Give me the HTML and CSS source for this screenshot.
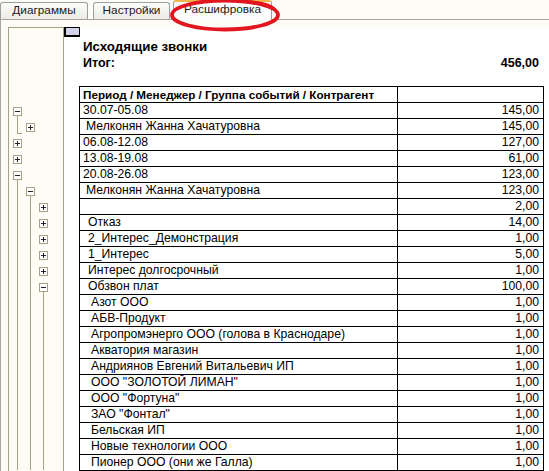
FILE: index.html
```html
<!DOCTYPE html>
<html lang="ru">
<head>
<meta charset="utf-8">
<title>Расшифровка</title>
<link rel="stylesheet" href="styles.css">
</head>
<body>
<div class="tabs">
  <div class="tab tab-1">Диаграммы</div>
  <div class="tab tab-2">Настройки</div>
  <div class="tab tab-active">Расшифровка</div>
  <svg class="mark" width="120" height="38" viewBox="0 0 120 38" aria-hidden="true">
    <ellipse cx="58" cy="19" rx="53" ry="14.5" fill="none" stroke="#e3161f" stroke-width="3.8"/>
    <path d="M78 5.5 Q104 6 109 15" fill="none" stroke="#e3161f" stroke-width="2.6"/>
  </svg>
</div>
<div class="panel">
  <div class="frame">
    <div class="gutter">
      <div class="gutter-head"></div>
      <div class="g-row"><div class="c open"><div class="bx mn"></div></div></div>
      <div class="g-row"><div class="c end"></div><div class="c"><div class="bx pl"></div></div></div>
      <div class="g-row"><div class="c"><div class="bx pl"></div></div></div>
      <div class="g-row"><div class="c"><div class="bx pl"></div></div></div>
      <div class="g-row"><div class="c open"><div class="bx mn"></div></div></div>
      <div class="g-row"><div class="c ln"></div><div class="c open"><div class="bx mn"></div></div></div>
      <div class="g-row"><div class="c ln"></div><div class="c ln"></div><div class="c"><div class="bx pl"></div></div></div>
      <div class="g-row"><div class="c ln"></div><div class="c ln"></div><div class="c"><div class="bx pl"></div></div></div>
      <div class="g-row"><div class="c ln"></div><div class="c ln"></div><div class="c"><div class="bx pl"></div></div></div>
      <div class="g-row"><div class="c ln"></div><div class="c ln"></div><div class="c"><div class="bx pl"></div></div></div>
      <div class="g-row"><div class="c ln"></div><div class="c ln"></div><div class="c"><div class="bx pl"></div></div></div>
      <div class="g-row"><div class="c ln"></div><div class="c ln"></div><div class="c open"><div class="bx mn"></div></div></div>
      <div class="g-row"><div class="c ln"></div><div class="c ln"></div><div class="c ln"></div></div>
      <div class="g-row"><div class="c ln"></div><div class="c ln"></div><div class="c ln"></div></div>
      <div class="g-row"><div class="c ln"></div><div class="c ln"></div><div class="c ln"></div></div>
      <div class="g-row"><div class="c ln"></div><div class="c ln"></div><div class="c ln"></div></div>
      <div class="g-row"><div class="c ln"></div><div class="c ln"></div><div class="c ln"></div></div>
      <div class="g-row"><div class="c ln"></div><div class="c ln"></div><div class="c ln"></div></div>
      <div class="g-row"><div class="c ln"></div><div class="c ln"></div><div class="c ln"></div></div>
      <div class="g-row"><div class="c ln"></div><div class="c ln"></div><div class="c ln"></div></div>
      <div class="g-row"><div class="c ln"></div><div class="c ln"></div><div class="c ln"></div></div>
      <div class="g-row"><div class="c ln"></div><div class="c ln"></div><div class="c ln"></div></div>
      <div class="g-row"><div class="c ln"></div><div class="c ln"></div><div class="c ln"></div></div>
    </div>
    <div class="sheet">
      <div class="corner"></div>
      <div class="report">
        <div class="title">Исходящие звонки</div>
        <div class="total"><span>Итог:</span><span>456,00</span></div>
        <table class="grid">
          <tr class="head"><td class="name">Период / Менеджер / Группа событий / Контрагент</td><td class="val"></td></tr>
          <tr><td class="name l1">30.07-05.08</td><td class="val">145,00</td></tr>
          <tr><td class="name l2">Мелконян Жанна Хачатуровна</td><td class="val">145,00</td></tr>
          <tr><td class="name l1">06.08-12.08</td><td class="val">127,00</td></tr>
          <tr><td class="name l1">13.08-19.08</td><td class="val">61,00</td></tr>
          <tr><td class="name l1">20.08-26.08</td><td class="val">123,00</td></tr>
          <tr><td class="name l2">Мелконян Жанна Хачатуровна</td><td class="val">123,00</td></tr>
          <tr><td class="name l3"></td><td class="val">2,00</td></tr>
          <tr><td class="name l3">Отказ</td><td class="val">14,00</td></tr>
          <tr><td class="name l3">2_Интерес_Демонстрация</td><td class="val">1,00</td></tr>
          <tr><td class="name l3">1_Интерес</td><td class="val">5,00</td></tr>
          <tr><td class="name l3">Интерес долгосрочный</td><td class="val">1,00</td></tr>
          <tr><td class="name l3">Обзвон плат</td><td class="val">100,00</td></tr>
          <tr><td class="name l4">Азот ООО</td><td class="val">1,00</td></tr>
          <tr><td class="name l4">АБВ-Продукт</td><td class="val">1,00</td></tr>
          <tr><td class="name l4">Агропромэнерго ООО (голова в Краснодаре)</td><td class="val">1,00</td></tr>
          <tr><td class="name l4">Акватория магазин</td><td class="val">1,00</td></tr>
          <tr><td class="name l4">Андриянов Евгений Витальевич ИП</td><td class="val">1,00</td></tr>
          <tr><td class="name l4">ООО "ЗОЛОТОЙ ЛИМАН"</td><td class="val">1,00</td></tr>
          <tr><td class="name l4">ООО "Фортуна"</td><td class="val">1,00</td></tr>
          <tr><td class="name l4">ЗАО "Фонтал"</td><td class="val">1,00</td></tr>
          <tr><td class="name l4">Бельская ИП</td><td class="val">1,00</td></tr>
          <tr><td class="name l4">Новые технологии ООО</td><td class="val">1,00</td></tr>
          <tr><td class="name l4">Пионер ООО (они же Галла)</td><td class="val">1,00</td></tr>
        </table>
      </div>
    </div>
  </div>
</div>
</body>
</html>
```

FILE: styles.css
```css
html, body {
  margin: 0;
  padding: 0;
}
body {
  width: 549px;
  height: 471px;
  overflow: hidden;
  background: #fcfbf5;
  font-family: "Liberation Sans", Arial, sans-serif;
  color: #000;
}

/* tabs */
.tabs {
  position: relative;
  display: flex;
  align-items: flex-end;
  height: 19px;
  border-bottom: 1px solid #a9a797;
  box-sizing: content-box;
}
.tab {
  box-sizing: border-box;
  height: 17px;
  border: 1px solid #9aa0a0;
  border-bottom: none;
  border-radius: 3px 3px 0 0;
  background: linear-gradient(#fdfdfb, #ebeae3);
  font-size: 11.8px;
  line-height: 15px;
  text-align: center;
  color: #1b1b1b;
}
.tab-1 { width: 88px; }
.tab-2 { width: 77px; margin-left: 5px; }
.tab-active {
  width: 99px;
  margin-left: 3px;
  height: 20px;
  margin-bottom: -1px;
  border-top: 2px solid #f2b64a;
  background: #fcfcfc;
  line-height: 15px;
}
.mark {
  position: absolute;
  left: 167px;
  top: -4px;
}

/* panel */
.panel {
  border-left: 1px solid #a9a797;
  padding: 7px 0 0 7px;
  height: 451px;
  box-sizing: border-box;
}
.frame {
  display: flex;
  height: 100%;
}
.gutter {
  --tl: #a6a28a;
  width: 56px;
  box-sizing: border-box;
  border-left: 1px solid var(--tl);
  border-top: 1px solid var(--tl);
  border-right: 1px solid var(--tl);
  background: #fefcf4;
  flex: none;
}
.gutter-head { height: 74px; }
.g-row {
  display: flex;
  height: 16px;
}
.c {
  width: 13px;
  height: 16px;
  flex: none;
}
.ln {
  background: linear-gradient(var(--tl), var(--tl)) 8px 0 / 1px 16px no-repeat;
}
.end {
  background:
    linear-gradient(var(--tl), var(--tl)) 8px 0 / 1px 16px no-repeat,
    linear-gradient(var(--tl), var(--tl)) 8px 15px / 6px 1px no-repeat;
}
.open {
  background: linear-gradient(var(--tl), var(--tl)) 8px 14px / 1px 2px no-repeat;
}
.bx {
  box-sizing: border-box;
  width: 9px;
  height: 9px;
  margin: 5px 0 0 4px;
  border: 1px solid var(--tl);
  background-color: #fff;
}
.mn {
  background: linear-gradient(#222, #222) 1px 3px / 5px 1px no-repeat, #fff;
}
.pl {
  background:
    linear-gradient(#222, #222) 1px 3px / 5px 1px no-repeat,
    linear-gradient(#222, #222) 3px 1px / 1px 5px no-repeat,
    #fff;
}

/* sheet */
.sheet {
  flex: 1;
  background: #fff;
  min-width: 0;
}
.corner {
  box-sizing: border-box;
  width: 16px;
  height: 10px;
  border: 2px solid #000;
  border-width: 1px 1px 2px 2px;
  background: #d3d4ea;
}
.report {
  margin-left: 15px;
  width: 465px;
}
.title {
  margin-top: 1px;
  padding-left: 4px;
  font-size: 13.3px;
  font-weight: bold;
  line-height: 17px;
}
.total {
  display: flex;
  justify-content: space-between;
  padding: 0 5px 0 4px;
  font-size: 12.5px;
  font-weight: bold;
  line-height: 17px;
}
.grid {
  margin-top: 14px;
  border-spacing: 0;
  border-left: 1px solid #000;
  border-top: 1px solid #000;
  table-layout: fixed;
  width: 465px;
  font-size: 12.2px;
}
.grid td {
  box-sizing: border-box;
  height: 16px;
  padding: 0;
  line-height: 15px;
  border-right: 1px solid #000;
  border-bottom: 1px solid #000;
  white-space: nowrap;
  overflow: hidden;
}
.grid .name { width: 318px; padding-left: 3px; }
.grid .val { width: 146px; text-align: right; padding-right: 4px; }
.grid .head .name { font-weight: bold; font-size: 11.7px; padding-left: 3px; }
.grid .l1 { padding-left: 3px; }
.grid .l2 { padding-left: 6px; }
.grid .l3 { padding-left: 8px; }
.grid .l4 { padding-left: 11px; }
```
